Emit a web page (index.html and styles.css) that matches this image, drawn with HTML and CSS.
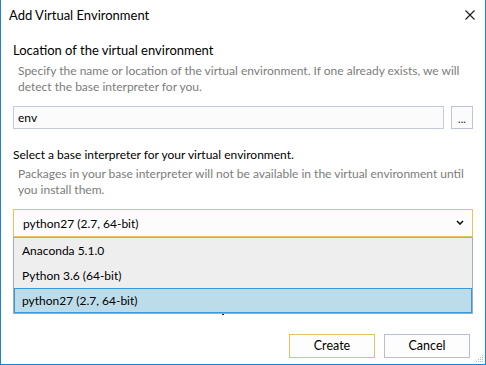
FILE: index.html
```html
<!DOCTYPE html>
<html>
<head>
<meta charset="utf-8">
<link rel="stylesheet" href="styles.css">
</head>
<body>
<div class="window">
  <div class="titlebar">
    <span class="title">Add Virtual Environment</span>
    <svg class="close" width="10" height="10" viewBox="0 0 10 10"><path d="M0.5 0.5L9.5 9.5M9.5 0.5L0.5 9.5" stroke="#1a1a1a" stroke-width="1.1" fill="none"/></svg>
  </div>
  <div class="content">
    <div class="label label-lg">Location of the virtual environment</div>
    <div class="desc">Specify the name or location of the virtual environment. If one already exists, we will detect the base interpreter for you.</div>
    <div class="input-row">
      <div class="input">env</div>
      <div class="browse">...</div>
    </div>
    <div class="label label-sm">Select a base interpreter for your virtual environment.</div>
    <div class="desc">Packages in your base interpreter will not be available in the virtual environment until you install them.</div>
    <div class="combo">
      <div class="select">
        <span>python27 (2.7, 64-bit)</span>
        <svg class="chev" width="8" height="5" viewBox="0 0 8 5"><path d="M1 1L4 4L7 1" stroke="#111" stroke-width="1.6" fill="none"/></svg>
      </div>
      <div class="dropdown">
        <div class="item">Anaconda 5.1.0</div>
        <div class="item">Python 3.6 (64-bit)</div>
        <div class="item selected">python27 (2.7, 64-bit)</div>
      </div>
      <div class="peek"></div>
    </div>
  </div>
  <div class="footer">
    <div class="btn btn-default">Create</div>
    <div class="btn">Cancel</div>
  </div>
  <svg class="grip" width="8" height="8" viewBox="0 0 8 8">
    <g fill="#b4b4b4">
      <rect x="6" y="0" width="1" height="1"/>
      <rect x="4" y="2" width="1" height="1"/><rect x="6" y="2" width="1" height="1"/>
      <rect x="2" y="4" width="1" height="1"/><rect x="4" y="4" width="1" height="1"/><rect x="6" y="4" width="1" height="1"/>
      <rect x="0" y="6" width="1" height="1"/><rect x="2" y="6" width="1" height="1"/><rect x="4" y="6" width="1" height="1"/><rect x="6" y="6" width="1" height="1"/>
    </g>
  </svg>
</div>
</body>
</html>
```
FILE: styles.css
```css
html, body {
  margin: 0;
  padding: 0;
  background: #ffffff;
}
body {
  font-family: "Lato", "Noto Sans", sans-serif;
  font-size: 12px;
  color: #111111;
}
.window {
  position: relative;
  width: 486px;
  height: 365px;
  box-sizing: border-box;
  border-left: 1px solid #1883d7;
  border-right: 1px solid #1883d7;
  border-bottom: 1px solid #1883d7;
  background: #ffffff;
  display: flex;
  flex-direction: column;
}
.titlebar {
  height: 31px;
  display: flex;
  align-items: center;
  justify-content: space-between;
  padding: 0 10px 0 8px;
  flex: none;
}
.title {
  font-size: 13px;
  line-height: 31px;
  color: #000000;
}
.close {
  display: block;
  margin-top: -1px;
}
.content {
  padding: 11px 12px 0 12px;
}
.label {
  line-height: 16px;
  color: #000000;
}
.label-lg {
  font-size: 13px;
}
.label-sm {
  font-size: 12px;
  margin-top: 18px;
}
.desc {
  margin-top: 5px;
  padding-left: 5px;
  line-height: 16px;
  color: #7c7c7c;
}
.label-sm + .desc {
  margin-top: 3px;
}
.input-row {
  display: flex;
  gap: 7px;
  margin-top: 11px;
  height: 23px;
}
.input {
  flex: 1;
  box-sizing: border-box;
  border: 1px solid #c3cad9;
  background: #fbfbfb;
  padding-left: 4px;
  line-height: 21px;
  color: #000;
}
.browse {
  width: 22px;
  box-sizing: border-box;
  border: 1px solid #bcc4d6;
  background: #fbfbfb;
  text-align: center;
  line-height: 24px;
  font-size: 11px;
  color: #222;
  overflow: hidden;
}
.combo {
  position: relative;
  margin-top: 11px;
}
.select {
  height: 28px;
  box-sizing: border-box;
  border: 1px solid #e6c260;
  background: #fcfcfc;
  display: flex;
  align-items: center;
  justify-content: space-between;
  padding: 0 8px 0 9px;
  color: #000;
}
.chev {
  display: block;
  margin-top: -2px;
}
.dropdown {
  position: absolute;
  left: 0;
  right: 0;
  top: 28px;
  border: 1px solid #a4abba;
  background: #eeeeee;
  z-index: 2;
}
.item {
  height: 25px;
  line-height: 25px;
  padding-left: 8px;
  color: #000;
  box-sizing: border-box;
}
.item.selected {
  background: #bddcea;
  border: 1px solid #349ade;
  line-height: 23px;
  padding-left: 7px;
}
.peek {
  position: absolute;
  left: 209px;
  top: 105px;
  width: 2px;
  height: 1px;
  background: #222;
}
.footer {
  margin-top: auto;
  display: flex;
  justify-content: flex-end;
  gap: 9px;
  padding: 0 15px 6px 0;
}
.btn {
  width: 86px;
  height: 24px;
  box-sizing: border-box;
  border: 1px solid #b7bed3;
  background: #fdfdfd;
  text-align: center;
  line-height: 22px;
  color: #000;
  font-size: 12.5px;
}
.btn-default {
  border-color: #e6c260;
}
.grip {
  position: absolute;
  right: 1px;
  bottom: 1px;
  display: block;
}
```
